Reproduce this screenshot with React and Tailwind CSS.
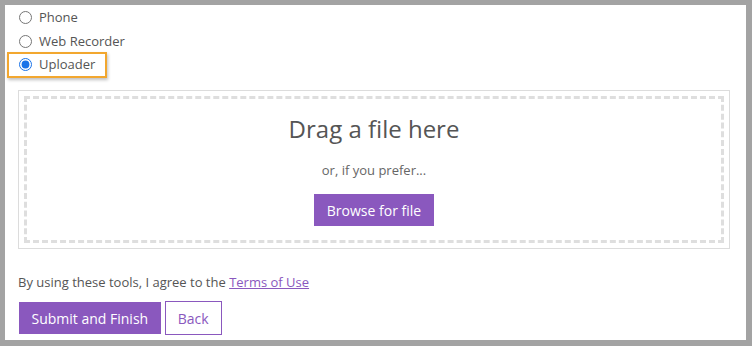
export default function App() {
  const opts = ['Phone', 'Web Recorder', 'Uploader'];
  return (
    <div className="h-[346px] w-[752px] bg-[#a3a3a3] pt-[5px] pl-[5px] pr-[6px] pb-[6px] font-['Open_Sans',sans-serif]">
      <div className="h-full bg-white pl-[13px] pr-[16px] pt-[1px]">
        <div className="flex flex-col">
          {opts.map((o, i) => (
            <label key={o} className="relative flex h-[23.5px] items-center gap-[7px] text-[13px] text-[#555]">
              {i === 2 && (
                <span className="absolute left-[-11px] top-[-1px] h-[26px] w-[100px] border-2 border-[#f2a72f] shadow-[1px_2px_3px_rgba(0,0,0,0.25)]" />
              )}
              <input type="radio" name="src" defaultChecked={i === 2} className="ml-[1px] h-[13px] w-[13px] accent-[#1a73e8]" />
              <span>{o}</span>
            </label>
          ))}
        </div>
        <div className="mt-[13px] border border-[#dcdcdc] p-[5px]">
          <div className="flex h-[147px] flex-col items-center border-[3px] border-dashed border-[#dedede]">
            <div className="mt-[14px] text-[24px] leading-[32px] text-[#555]">Drag a file here</div>
            <div className="mt-[16px] text-[13px] text-[#666]">or, if you prefer...</div>
            <button className="mt-[14px] h-[32px] bg-[#8a58be] px-[13px] text-[14px] text-white">Browse for file</button>
          </div>
        </div>
        <p className="mt-[24px] text-[13px] text-[#555]">
          By using these tools, I agree to the <a href="#" className="text-[#8a58be] underline">Terms of Use</a>
        </p>
        <div className="ml-[1px] mt-[10px] flex gap-[4px]">
          <button className="h-[32px] bg-[#8a58be] px-[12.5px] text-[14px] text-white">Submit and Finish</button>
          <button className="mt-[-1px] h-[34px] border border-[#8a58be] bg-white px-[12px] text-[14px] text-[#8a58be]">Back</button>
        </div>
      </div>
    </div>
  );
}
